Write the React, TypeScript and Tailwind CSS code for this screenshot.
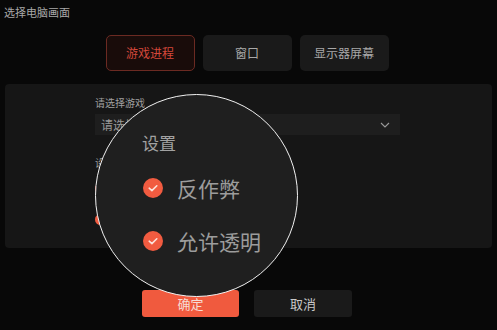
import React from "react";

const font = { fontFamily: '"Noto Sans CJK SC", "Noto Sans", sans-serif' };

function Check({ size }: { size: number }) {
  return (
    <svg width={size} height={size} viewBox="0 0 20 20">
      <circle cx="10" cy="10" r="10" fill="#f15b40" />
      <path d="M6.2 10.2 L8.9 12.6 L13.8 7.8" fill="none" stroke="#fbe3dc" strokeWidth="1.6" strokeLinecap="round" strokeLinejoin="round" />
    </svg>
  );
}

export default function App() {
  return (
    <div className="relative w-[497px] h-[330px] overflow-hidden bg-[#080808] flex flex-col" style={font}>
      <div className="pl-[4px] pt-[4px] h-[20px] text-[11px] leading-[16px] text-[#a8a8a8]">选择电脑画面</div>
      <div className="flex justify-center gap-[8px] mt-[15px] pr-[3px]">
        <div className="w-[89px] h-[36px] rounded-[5px] border border-[#6b2a22] bg-[#190c0a] flex items-center justify-center text-[12px] text-[#d4483b]">游戏进程</div>
        <div className="w-[89px] h-[36px] rounded-[5px] bg-[#1a1a1a] flex items-center justify-center text-[12px] text-[#a8a8a8]">窗口</div>
        <div className="w-[89px] h-[36px] rounded-[5px] bg-[#1a1a1a] flex items-center justify-center text-[12px] text-[#a8a8a8]">显示器屏幕</div>
      </div>
      <div className="mx-[5px] mt-[13px] h-[164px] rounded-[4px] bg-[#161616] pl-[90px] pt-[12px] flex flex-col">
        <div className="text-[10px] leading-[14px] text-[#a0a0a0]">请选择游戏</div>
        <div className="mt-[4px] w-[305px] h-[21px] bg-[#1e1e1e] flex items-center justify-between pl-[6px] pr-[10px]">
          <span className="text-[12px] text-[#9a9a9a]">请选择游戏</span>
          <svg width="10" height="6" viewBox="0 0 10 6">
            <path d="M1 1 L5 5 L9 1" fill="none" stroke="#9a9a9a" strokeWidth="1.1" />
          </svg>
        </div>
        <div className="mt-[21px] text-[10px] leading-[14px] text-[#a0a0a0]">设置</div>
        <div className="mt-[10px] flex items-center gap-[8px] text-[11px] text-[#9a9a9a]">
          <Check size={11} />
          <span>反作弊</span>
        </div>
        <div className="mt-[15px] flex items-center gap-[8px] text-[11px] text-[#9a9a9a]">
          <Check size={11} />
          <span>允许透明</span>
        </div>
      </div>
      <div className="flex justify-center gap-[15px] mt-[42px] pr-[3px]">
        <div className="w-[97px] h-[27px] rounded-[3px] bg-[#f05a3e] flex items-center justify-center text-[13px] text-[#f6dcd4]">确定</div>
        <div className="w-[98px] h-[27px] rounded-[3px] bg-[#1a1a1a] flex items-center justify-center text-[13px] text-[#c8c8c8]">取消</div>
      </div>

      <div className="absolute left-[95px] top-[94px] w-[203px] h-[203px] rounded-full border-[1.5px] border-[#f2f2f2] bg-[#1f1f1f] overflow-hidden">
        <div className="absolute left-[46px] top-[36px] text-[17px] leading-[24px] text-[#a2a2a2]">设置</div>
        <div className="absolute left-[47px] top-[81px] flex items-center gap-[14px]">
          <Check size={20} />
          <span className="text-[21px] leading-[24px] text-[#9c9c9c]">反作弊</span>
        </div>
        <div className="absolute left-[47px] top-[134px] flex items-center gap-[14px]">
          <Check size={20} />
          <span className="text-[21px] leading-[24px] text-[#9c9c9c]">允许透明</span>
        </div>
      </div>
    </div>
  );
}
